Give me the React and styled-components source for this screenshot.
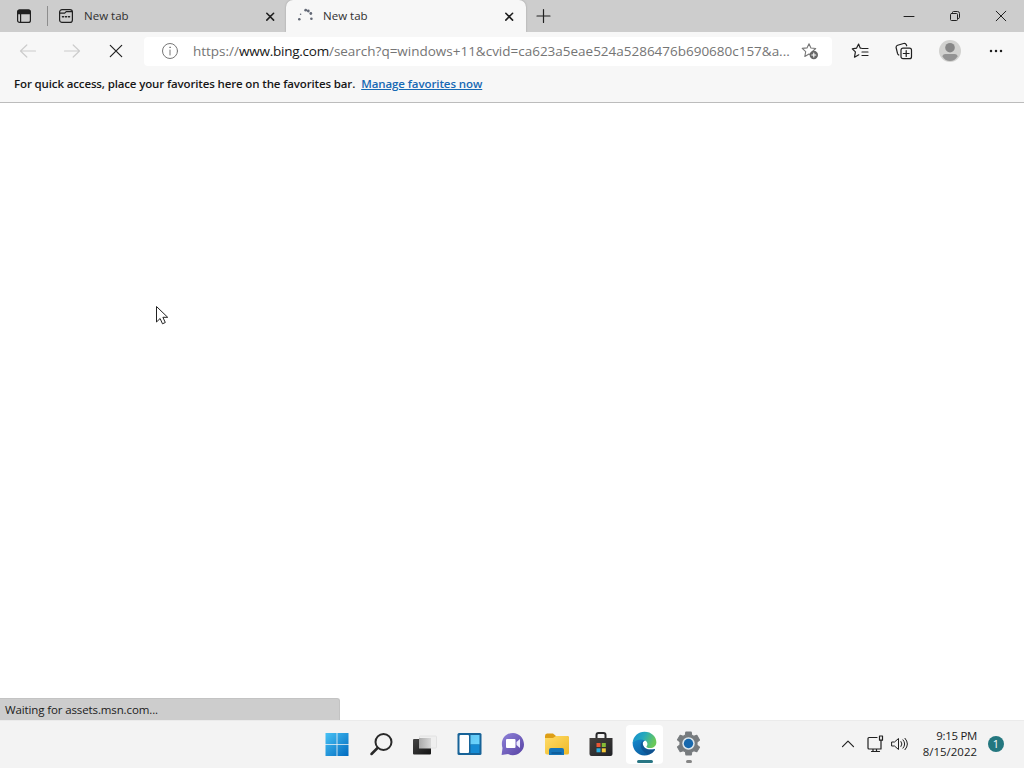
import React from "react";
import styled, { createGlobalStyle } from "styled-components";

const GlobalStyle = createGlobalStyle`
  * { box-sizing: border-box; }
  body { margin: 0; background: #fff; overflow: hidden; }
  svg { display: block; flex: none; }
`;

const Desktop = styled.div`
  width: 1024px;
  height: 768px;
  display: flex;
  flex-direction: column;
  background: #fff;
  color: #1b1b1b;
  font: 12px/16px "Open Sans", "Noto Sans", sans-serif;
  white-space: nowrap;
`;

const TabStrip = styled.header`
  height: 32px;
  display: flex;
  background: #cdcdcd;
`;

const TabActions = styled.div`
  width: 48px;
  display: flex;
  align-items: center;
  padding-left: 16px;
`;

const TabDivider = styled.div`
  width: 1px;
  height: 20px;
  margin: 6px 0 0 -1px;
  background: #8d8d8d;
`;

const Tab = styled.div`
  width: ${(p) => (p.$active ? 240 : 238)}px;
  height: 32px;
  display: flex;
  align-items: center;
  padding-left: ${(p) => (p.$active ? 11 : 9)}px;
  padding-right: ${(p) => (p.$active ? 9 : 8)}px;
  background: ${(p) => (p.$active ? "#f7f7f7" : "#cdcdcd")};
  border-radius: ${(p) => (p.$active ? "7px 7px 0 0" : "0 0 6px 0")};
  box-shadow: ${(p) => (p.$active ? "0 0 2px #999" : "none")};
`;

const TabTitle = styled.span`
  flex: 1;
  margin-left: ${(p) => p.$gap}px;
  font-size: 11.5px;
  letter-spacing: 0.02px;
  color: #303030;
`;

const NewTab = styled.div`
  width: 34px;
  display: grid;
  place-items: center;
`;

const WindowControls = styled.div`
  margin-left: auto;
  display: flex;
`;

const WindowButton = styled.div`
  width: 46px;
  display: grid;
  place-items: center;
`;

const Toolbar = styled.nav`
  height: 38px;
  display: flex;
  align-items: center;
  background: #f7f7f7;
  padding-left: 6px;
`;

const ToolButton = styled.div`
  width: ${(p) => p.$w || 44}px;
  display: grid;
  place-items: center;
`;

const AddressBar = styled.div`
  width: 688px;
  height: 29px;
  margin-left: 6px;
  margin-right: 6px;
  padding: 0 13px 0 17px;
  display: flex;
  align-items: center;
  background: #fff;
  border-radius: 4px;
`;

const Url = styled.span`
  flex: 1;
  margin-left: 14px;
  font-size: 13.5px;
  letter-spacing: -0.01px;
  color: #757575;
  b { font-weight: 400; color: #171717; letter-spacing: -0.24px; }
`;

const FavoritesBar = styled.div`
  height: 33px;
  padding: 6px 14px 0;
  background: #f7f7f7;
  border-bottom: 1px solid #bcbcbc;
  color: #171717;
  font-size: 11.5px;
  font-weight: 600;
  letter-spacing: -0.135px;
`;

const FavoritesLink = styled.a`
  margin-left: 6px;
  color: #1769b4;
  letter-spacing: -0.09px;
  text-decoration: underline;
  text-underline-offset: 1px;
`;

const Page = styled.main`
  flex: 1;
  display: flex;
  align-items: flex-end;
  position: relative;
  background: #fff;
`;

const StatusBar = styled.div`
  width: 340px;
  height: 22px;
  padding: 3px 5px 0;
  background: #cdcdcd;
  border: solid #c3c3c3;
  border-width: 1px 1px 0 0;
  border-radius: 0 3px 0 0;
  font-size: 11.5px;
  line-height: 15px;
  letter-spacing: -0.12px;
`;

const Cursor = styled.svg`
  position: absolute;
  left: 155px;
  top: 202px;
`;

const Taskbar = styled.footer`
  height: 48px;
  display: flex;
  background: #f3f3f3;
  border-top: 1px solid #ebebeb;
`;

const TaskApps = styled.div`
  display: flex;
  padding-left: 314.5px;
`;

const TaskApp = styled.div`
  width: 44px;
  height: 47px;
  display: flex;
  flex-direction: column;
  align-items: center;
  padding-top: 11px;
`;

const TaskTile = styled.div`
  width: 37px;
  height: 39px;
  display: flex;
  justify-content: center;
  margin-top: -7px;
  padding-top: 6px;
  border-radius: 4px;
  background: ${(p) => (p.$active ? "#fff" : "transparent")};
`;

const RunningMark = styled.i`
  width: ${(p) => (p.$active ? 16 : 6)}px;
  height: 3px;
  margin-top: -4px;
  border-radius: 2px;
  background: ${(p) => (p.$active ? "#287684" : "#858585")};
`;

const Tray = styled.div`
  margin-left: auto;
  display: flex;
  align-items: center;
  padding: 0 20px 2px 0;
`;

const TrayIcons = styled.div`
  display: flex;
  align-items: center;
  gap: 4px;
`;

const Clock = styled.div`
  width: 67px;
  text-align: right;
  font-size: 11.4px;
`;

const ClockLine = styled.div`
  letter-spacing: ${(p) => (p.$date ? "0.03px" : "-0.25px")};
`;

const Badge = styled.div`
  width: 16px;
  height: 16px;
  margin-left: 11px;
  border-radius: 50%;
  display: grid;
  place-items: center;
  background: #24777f;
  color: white;
  font-size: 11px;
`;

const Icon = ({ size = 20, color = "#202020", stroke = 1.2, children }) => (
  <svg width={size} height={size} viewBox={`0 0 ${size} ${size}`} fill="none" stroke={color} strokeWidth={stroke} strokeLinecap="round" strokeLinejoin="round">{children}</svg>
);

const CloseTab = () => <Icon size={16} stroke={1.6}><path d="m4.8 5.3 6.8 6.8m0-6.8-6.8 6.8" /></Icon>;

const starPath = "m8 1.8 1.9 4.2 4.8.5-3.5 3.1.8 4.7L8 12l-4.2 2.5.9-4.9-3.5-3.2 4.8-.5Z";

const Edge = () => (
  <svg width="25" height="25" viewBox="0 0 24 24">
    <defs>
      <linearGradient id="edgeTop" x2="1" y2=".35"><stop stopColor="#168bd0" /><stop offset=".5" stopColor="#25a9bd" /><stop offset="1" stopColor="#69c85b" /></linearGradient>
      <linearGradient id="edgeBlue" x2=".8" y2="1"><stop stopColor="#168bd0" /><stop offset="1" stopColor="#0b5799" /></linearGradient>
    </defs>
    <path fill="url(#edgeBlue)" d="M.6 11.2C2.4 7.5 9 5.6 12.8 9c-1.9.4-2.8 1.9-2.4 3.8.8 4.2 5.4 6 10.7 4.6.8-.2 1.2.3.7 1C18.7 22.1 15.6 23.4 12 23.4 5.4 23.4.6 18.2.6 11.2Z" />
    <path fill="url(#edgeTop)" d="M.6 11.4C1.2 4.8 6 .6 12 .6c6.8 0 11.4 4.8 11.4 10.2 0 3.7-2.8 5.6-6 5.6-2.6 0-4.1-1-3.4-1.8 1.7-2 .6-4.8-1.9-5.8C8.4 7.3 3 8.6.6 11.4Z" />
    <path fill="#104b87" opacity=".65" d="M9.5 10.2c-3.1 4 .2 10.5 6.8 12.3 2.2-.7 4.2-2.1 5.5-4.1.5-.7.1-1.2-.7-1-5.3 1.4-9.9-.4-10.7-4.6-.3-1.6.2-2.7 1.2-3.3-.8 0-1.5.2-2.1.7Z" />
  </svg>
);

const Gear = () => (
  <svg width="25" height="25" viewBox="0 0 24 24">
    <path fill="#777b7e" stroke="#777b7e" strokeLinejoin="round" d="m9.4 1-.5 3-2 1.1L4 4 1.4 8.5l2.4 2v2.8l-2.4 2L4 20l3-1.1L9 20l.5 3h5.2l.5-3 2-1.1L20 20l2.6-4.5-2.4-2v-2.8l2.4-2L20 4l-2.9 1.1-2-1.1-.5-3Z" />
    <circle cx="12" cy="12" r="6" fill="#dce6ec" />
    <circle cx="12" cy="12" r="4.5" fill="#1768ad" />
  </svg>
);

const Browser = () => (
  <>
    <TabStrip>
      <TabActions><Icon size={16}><rect x="1.6" y="2" width="12.8" height="12.4" rx="2" /><path d="M2 3q.3-1 1.5-1h9q1.2 0 1.5 1v2.6H2Z" fill="#202020" /><path d="M4.6 6v8" /></Icon></TabActions>
      <TabDivider />
      <Tab>
        <Icon size={18}><rect x="2.6" y="2.6" width="12.8" height="12.8" rx="2.5" /><path d="M3 6.2h4.7l1.5-1.6H15" /><path d="M5.5 9.8h1m2 0h1m2 0h1" strokeWidth="1.5" /></Icon>
        <TabTitle $gap={9}>New tab</TabTitle><CloseTab />
      </Tab>
      <Tab $active>
        <Icon size={18} stroke={0}><g fill="#626875"><circle cx="2.3" cy="12.2" r="1.3" /><circle cx="3.6" cy="7.2" r=".8" /><circle cx="8.7" cy="3.2" r="1.4" /><circle cx="11.3" cy="4" r="1.4" /><circle cx="13.8" cy="6.5" r="1.4" /><circle cx="14.4" cy="11.8" r="1.3" /></g></Icon>
        <TabTitle $gap={8}>New tab</TabTitle><CloseTab />
      </Tab>
      <NewTab><Icon size={16}><path d="M8.5 1.5v13M2 8h13" /></Icon></NewTab>
      <WindowControls>
        <WindowButton><Icon size={12} stroke={1}><path d="M1 6.5h10" /></Icon></WindowButton>
        <WindowButton><Icon size={12} stroke={1}><rect x="1.5" y="3.5" width="7" height="7" rx="1" /><path d="M3.5 3.3V2.5q0-1 1-1h4q2 0 2 2v4q0 1-1 1" /></Icon></WindowButton>
        <WindowButton><Icon size={12} stroke={1}><path d="m1.2 1.2 9.6 9.6m0-9.6-9.6 9.6" /></Icon></WindowButton>
      </WindowControls>
    </TabStrip>
    <Toolbar>
      <ToolButton><Icon color="#cccccc"><path d="M17.5 10h-15m6.3-6L2.5 10l6.3 6" /></Icon></ToolButton>
      <ToolButton><Icon color="#cccccc"><path d="M2.5 10h15m-6.3-6 6.3 6-6.3 6" /></Icon></ToolButton>
      <ToolButton><Icon size={16}><path d="m2.3 2.3 11.4 11.4m0-11.4L2.3 13.7" /></Icon></ToolButton>
      <AddressBar>
        <Icon size={18} color="#777" stroke={1}><circle cx="9" cy="9" r="7.5" /><path d="M9 8v5" /><circle cx="9" cy="5.3" r=".3" /></Icon>
        <Url>https://<b>www.bing.com</b>/search?q=windows+11&amp;cvid=ca623a5eae524a5286476b690680c157&amp;a...</Url>
        <Icon size={18} color="#777" stroke={1.1}><path d={starPath} /><circle cx="12.8" cy="13" r="4.2" fill="#666" stroke="none" /><path stroke="#fff" d="M10.8 13h4m-2-2v4" /></Icon>
      </AddressBar>
      <ToolButton><Icon size={18}><path d="m10 6.2-.8-.1L7.6 2 5.5 6.2l-4.2.6 3.1 3.1-.9 5.3 4.3-2.4M11 6.5h6M11 10h6m-6 3.5h6" /></Icon></ToolButton>
      <ToolButton><Icon size={18}><rect x="6" y="6.2" width="10.5" height="10.5" rx="2" /><path d="M11.2 8.6v5.8M8.3 11.5h5.8M3.8 13q-1-.5-1.3-1.6L1.2 6q-.5-2 1.4-2.7l6-1.8q2-.5 2.7 1.2l.4 1.1" /></Icon></ToolButton>
      <ToolButton $w={48}><svg width="22" height="22"><circle cx="11" cy="11" r="11" fill="#d2d2d0" /><circle cx="11" cy="7.7" r="4.8" fill="#878787" /><path d="M3.5 16.5q0-2.5 3-2.5h9q3 0 3 2.5-2.8 4.5-7.5 4.5t-7.5-4.5Z" fill="#949494" /></svg></ToolButton>
      <ToolButton><Icon size={16} stroke={0}><g fill="#202020"><circle cx="3" cy="8" r="1.25" /><circle cx="8" cy="8" r="1.25" /><circle cx="13" cy="8" r="1.25" /></g></Icon></ToolButton>
    </Toolbar>
    <FavoritesBar>For quick access, place your favorites here on the favorites bar.<FavoritesLink>Manage favorites now</FavoritesLink></FavoritesBar>
  </>
);

const WindowsTaskbar = () => (
  <Taskbar>
    <TaskApps>
      <TaskApp><svg width="24" height="24" viewBox="0 0 24 24"><defs><linearGradient id="win" x2="1" y2="1"><stop stopColor="#48c2f5" /><stop offset="1" stopColor="#006abf" /></linearGradient></defs><path fill="url(#win)" d="M.5 1h11.1v11H.5zM12.4 1h11.1v11H12.4zM.5 12.8h11.1V24H.5zM12.4 12.8h11.1V24H12.4z" /></svg></TaskApp>
      <TaskApp><Icon size={24} stroke={2} color="#292929"><circle cx="14.5" cy="10" r="8" /><path d="m8.5 16-6 6" strokeWidth="2.5" /></Icon></TaskApp>
      <TaskApp><svg width="26" height="24"><defs><linearGradient id="viewDark" y2="1"><stop stopColor="#444" /><stop offset="1" stopColor="#141414" /></linearGradient><linearGradient id="viewLight"><stop stopColor="#aaa" /><stop offset="1" stopColor="#d8d8d8" /></linearGradient></defs><rect x="7.5" y="4" width="17" height="12" rx="1" fill="#efefef" stroke="#e2e2e2" /><rect x="1" y="7" width="18" height="15.5" rx="1" fill="url(#viewDark)" /><path d="M7 6h12v10.5H7z" fill="url(#viewLight)" /></svg></TaskApp>
      <TaskApp><svg width="26" height="24"><defs><linearGradient id="paneLight" x2="1" y2="1"><stop stopColor="#62c7f3" /><stop offset="1" stopColor="#6dd6ff" /></linearGradient></defs><rect x="1.5" y="1" width="24" height="22" rx="1.5" fill="#176398" /><rect x="3.5" y="3" width="9.5" height="18" rx="1" fill="#fff" /><path d="M14.5 3h9v9.5h-9z" fill="url(#paneLight)" /><path d="M14.5 12.5h9V21h-9z" fill="#168bd3" /></svg></TaskApp>
      <TaskApp><svg width="24" height="24"><defs><linearGradient id="chat" x2="1" y2="1"><stop stopColor="#8f83d9" /><stop offset="1" stopColor="#5741a3" /></linearGradient></defs><path d="M12 1C4 1-1 8 1.5 16L.6 23l6.5-1C14 26 23 20 23 12.5 23 6 18 1 12 1Z" fill="url(#chat)" /><rect x="5" y="7" width="9.5" height="9" rx="1" fill="#fff" /><path d="m15.5 10 3.5-3v9l-3.5-3Z" fill="#eceaff" /></svg></TaskApp>
      <TaskApp><svg width="26" height="24"><defs><linearGradient id="folder" x2="1" y2="1"><stop stopColor="#ffdc68" /><stop offset="1" stopColor="#efb926" /></linearGradient></defs><path d="M1 4q0-2.5 2-2.5h6L12 4h11q2 0 2 2v8H1Z" fill="#dd9e16" /><path d="M1 6h8l3-2h11q2 0 2 2v15q0 1.5-2 1.5H3q-2 0-2-2Z" fill="url(#folder)" /><path d="M5 23v-5q0-2 2-2h11q2 0 2 2v5Z" fill="#1474b8" /><path d="M7.5 21h10" stroke="#0c5793" strokeWidth="1.5" /></svg></TaskApp>
      <TaskApp><svg width="26" height="25"><defs><linearGradient id="store" y2="1"><stop stopColor="#45413e" /><stop offset="1" stopColor="#202226" /></linearGradient></defs><path d="M8.5 6V3q0-2 2-2h5q2 0 2 2v3" fill="none" stroke="#29292b" strokeWidth="2" /><path d="M1.5 6h23v16q0 2-2 2h-19q-2 0-2-2Z" fill="url(#store)" /><path d="M8.5 11h4v4h-4z" fill="#eb5634" /><path d="M13.8 11h4v4h-4z" fill="#85bc36" /><path d="M8.5 16.3h4v4h-4z" fill="#2caddd" /><path d="M13.8 16.3h4v4h-4z" fill="#f5c83a" /></svg></TaskApp>
      <TaskApp><TaskTile $active><Edge /></TaskTile><RunningMark $active /></TaskApp>
      <TaskApp><TaskTile><Gear /></TaskTile><RunningMark /></TaskApp>
    </TaskApps>
    <Tray>
      <TrayIcons>
        <Icon size={20}><path d="m4.5 12.7 5.5-5.5 5.5 5.5" /></Icon>
        <Icon size={24}><path d="M15 5.5H7q-1 0-1 1V16q0 1 1 1h12v-2.5M11 17v2.5m3.5-2.5v2.5m-5 0h8M17.5 4h3v4.2h-3zM19 8.2v7" /></Icon>
        <Icon size={20} stroke={1}><path d="M2 8h2.5L8.5 4.5v11L4.5 12H2ZM11 7.5q2 2.5 0 5M13 5.8q3.5 4.2 0 8.4M15 4.3q5 5.7 0 11.4" /></Icon>
      </TrayIcons>
      <Clock><ClockLine>9:15 PM</ClockLine><ClockLine $date>8/15/2022</ClockLine></Clock>
      <Badge>1</Badge>
    </Tray>
  </Taskbar>
);

export default function App() {
  return (
    <Desktop>
      <GlobalStyle />
      <Browser />
      <Page>
        <StatusBar>Waiting for assets.msn.com...</StatusBar>
        <Cursor width="14" height="20"><path d="M1.5 1.5V17l3.6-3.5 2.4 5.3 2.8-1.3-2.4-5.2h4.8Z" fill="#fff" stroke="#222" /></Cursor>
      </Page>
      <WindowsTaskbar />
    </Desktop>
  );
}
